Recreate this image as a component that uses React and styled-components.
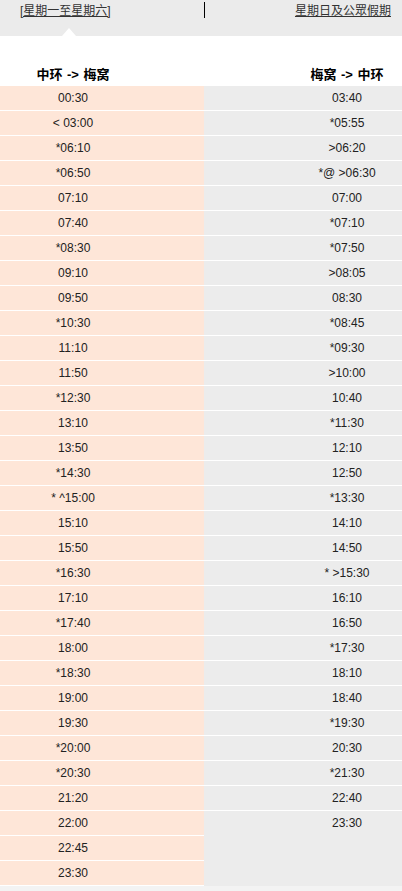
import React from 'react';
import styled, { createGlobalStyle } from 'styled-components';

const GlobalStyle = createGlobalStyle`
  html, body {
    margin: 0;
    padding: 0;
    background: #f3f3f3;
    font-family: "Liberation Sans", "Noto Sans CJK SC", sans-serif;
  }
`;

// timetable data
const fromCentral = [
  '00:30', '< 03:00', '*06:10', '*06:50', '07:10', '07:40', '*08:30', '09:10',
  '09:50', '*10:30', '11:10', '11:50', '*12:30', '13:10', '13:50', '*14:30',
  '* ^15:00', '15:10', '15:50', '*16:30', '17:10', '*17:40', '18:00', '*18:30',
  '19:00', '19:30', '*20:00', '*20:30', '21:20', '22:00', '22:45', '23:30',
];

const fromMuiWo = [
  '03:40', '*05:55', '>06:20', '*@ >06:30', '07:00', '*07:10', '*07:50', '>08:05',
  '08:30', '*08:45', '*09:30', '>10:00', '10:40', '*11:30', '12:10', '12:50',
  '*13:30', '14:10', '14:50', '* >15:30', '16:10', '16:50', '*17:30', '18:10',
  '18:40', '*19:30', '20:30', '*21:30', '22:40', '23:30',
];

const TabBar = styled.div`
  display: grid;
  grid-template-columns: 204px 198px;
  height: 36px;
  background: #ebebeb;
  font-size: 12px;
  color: #333;
`;

const Tab = styled.div`
  position: relative;
  display: flex;
  justify-content: ${(p) => (p.$right ? 'flex-end' : 'flex-start')};
  padding: ${(p) => (p.$right ? '2px 11px 0 0' : '2px 0 0 20px')};
  border-left: ${(p) => (p.$right ? '1px solid #000' : 'none')};
  height: 14px;
  line-height: 15px;
  margin-top: 2px;
`;

const TabLink = styled.a`
  color: #333;
  text-decoration: underline;
  cursor: pointer;
`;

const Pointer = styled.span`
  position: absolute;
  left: 62px;
  top: 26px;
  width: 0;
  height: 0;
  border-left: 7px solid transparent;
  border-right: 7px solid transparent;
  border-bottom: 8px solid #fff;
`;

const Sheet = styled.div`
  background: #fff;
  padding-top: 28px;
`;

const Row = styled.div`
  display: grid;
  grid-template-columns: 204px 198px;
`;

const HeadCell = styled.div`
  height: 22px;
  display: flex;
  align-items: flex-start;
  justify-content: center;
  padding: ${(p) => (p.$right ? '0 0 0 88px' : '0 58px 0 0')};
  font-size: 13px;
  font-weight: bold;
  color: #000;
  word-spacing: 1px;
`;

const TimeCell = styled.div`
  height: 24px;
  display: flex;
  align-items: center;
  justify-content: center;
  padding: ${(p) => (p.$right ? '0 0 0 88px' : '0 58px 0 0')};
  background: ${(p) => (p.$right ? '#ececec' : '#fee6d8')};
  border-bottom: 1px solid ${(p) => (p.$line ? '#fff' : p.$right ? '#ececec' : '#fee6d8')};
  font-size: 12px;
  color: #222;
  white-space: pre;
`;

const App = () => {
  const rows = fromCentral.map((t, i) => ({ left: t, right: fromMuiWo[i] }));

  return (
    <>
      <GlobalStyle />
      <TabBar>
        <Tab>
          <TabLink>[星期一至星期六]</TabLink>
          <Pointer />
        </Tab>
        <Tab $right>
          <TabLink>星期日及公眾假期</TabLink>
        </Tab>
      </TabBar>
      <Sheet>
        <Row>
          <HeadCell>中环 -&gt; 梅窝</HeadCell>
          <HeadCell $right>梅窝 -&gt; 中环</HeadCell>
        </Row>
        {rows.map((r, i) => (
          <Row key={i}>
            <TimeCell $line>{r.left}</TimeCell>
            <TimeCell $right $line={!!fromMuiWo[i + 1]}>
              {r.right || ''}
            </TimeCell>
          </Row>
        ))}
      </Sheet>
    </>
  );
};

export default App;
